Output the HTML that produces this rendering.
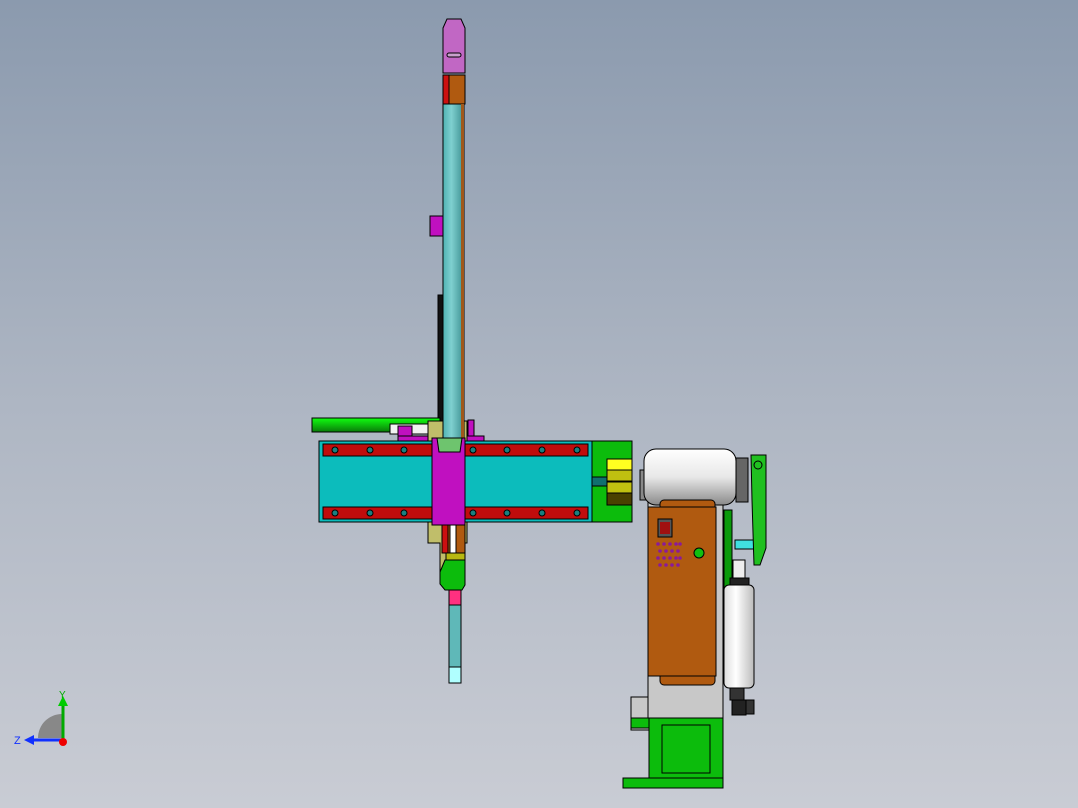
<!DOCTYPE html>
<html><head><style>
html,body{margin:0;padding:0}
body{width:1078px;height:808px;overflow:hidden;background:linear-gradient(#8b9aae,#aeb6c3 50%,#c9ccd4);font-family:"Liberation Sans",sans-serif}
svg{position:absolute;left:0;top:0}
</style></head><body>
<svg width="1078" height="808" viewBox="0 0 1078 808" stroke="#000" stroke-width="1">
<defs>
<linearGradient id="tl" x1="0" x2="1"><stop offset="0" stop-color="#4fb3b3"/><stop offset=".4" stop-color="#7fd0d0"/><stop offset="1" stop-color="#3c8f90"/></linearGradient>
<linearGradient id="gb" x1="0" y1="0" x2="0" y2="1"><stop offset="0" stop-color="#10ff10"/><stop offset="1" stop-color="#0a7a0a"/></linearGradient>
<linearGradient id="wc" x1="0" y1="0" x2="0" y2="1"><stop offset="0" stop-color="#fff"/><stop offset=".5" stop-color="#e8e8e8"/><stop offset="1" stop-color="#8a8a8a"/></linearGradient>
<linearGradient id="wm" x1="0" x2="1"><stop offset="0" stop-color="#ddd"/><stop offset=".4" stop-color="#fff"/><stop offset="1" stop-color="#bbb"/></linearGradient>
</defs>
<rect x="438" y="295" width="6" height="145" fill="#111"/>
<path d="M443 28 L447 19 H461 L465 28 V73 H443 Z" fill="#c167c4"/>
<rect x="447" y="53" width="14" height="4" rx="2" fill="#c8a0cc"/>
<rect x="443" y="75" width="6" height="29" fill="#cc1010"/>
<rect x="449" y="75" width="16" height="29" fill="#b05a10"/>
<rect x="312" y="418" width="128" height="14" fill="url(#gb)"/>
<rect x="390" y="424" width="40" height="10" fill="#f2f2f2"/>
<rect x="398" y="426" width="14" height="12" fill="#c010c0"/>
<rect x="468" y="420" width="6" height="20" fill="#c010c0"/>
<rect x="398" y="436" width="86" height="6" fill="#c010c0"/>
<path d="M428 421 H467 V543 H447 V575 H440 V543 H428 Z" fill="#c0be6a"/>
<rect x="443" y="104" width="21" height="336" fill="url(#tl)"/>
<rect x="461" y="104" width="3" height="336" fill="#a0581a" stroke="none"/>
<rect x="430" y="216" width="13" height="20" fill="#c010c0"/>
<rect x="319" y="441" width="273" height="81" fill="#0cbcbc"/>
<rect x="323" y="444" width="265" height="12" fill="#c00c0c"/>
<rect x="323" y="507" width="265" height="12" fill="#c00c0c"/>
<g fill="#1a8080" stroke="#000">
<circle cx="335" cy="450" r="3"/><circle cx="370" cy="450" r="3"/><circle cx="404" cy="450" r="3"/><circle cx="473" cy="450" r="3"/><circle cx="507" cy="450" r="3"/><circle cx="542" cy="450" r="3"/><circle cx="577" cy="450" r="3"/>
<circle cx="335" cy="513" r="3"/><circle cx="370" cy="513" r="3"/><circle cx="404" cy="513" r="3"/><circle cx="473" cy="513" r="3"/><circle cx="507" cy="513" r="3"/><circle cx="542" cy="513" r="3"/><circle cx="577" cy="513" r="3"/>
</g>
<rect x="432" y="438" width="33" height="87" fill="#c010c0"/>
<path d="M437 438 H462 L460 452 H439 Z" fill="#6ec46e"/>
<rect x="442" y="525" width="23" height="28" fill="#b05a10"/>
<rect x="442" y="525" width="6" height="28" fill="#cc1010"/>
<rect x="450" y="525" width="6" height="40" fill="#fff"/>
<rect x="446" y="553" width="19" height="7" fill="#b8b810"/>
<path d="M445 560 H465 V585 L462 590 H445 L440 584 V572 Z" fill="#0cbc0c"/>
<rect x="449" y="590" width="12" height="15" fill="#ff3080"/>
<rect x="449" y="605" width="12" height="62" fill="#5fb8b8"/>
<rect x="449" y="667" width="12" height="16" fill="#b0ffff"/>
<rect x="592" y="441" width="40" height="81" fill="#0cbc0c"/>
<rect x="607" y="459" width="25" height="11" fill="#ffff20"/>
<rect x="607" y="470" width="25" height="11" fill="#c0c010"/>
<rect x="607" y="482" width="25" height="11" fill="#c0c010"/>
<rect x="607" y="493" width="25" height="12" fill="#4a4000"/>
<rect x="592" y="477" width="15" height="9" fill="#107070"/>
<rect x="631" y="697" width="18" height="33" fill="#c8c8c8"/>
<rect x="648" y="480" width="75" height="238" fill="#c8c8c8"/>
<rect x="640" y="470" width="10" height="30" fill="#888"/>
<rect x="644" y="449" width="92" height="56" rx="12" fill="url(#wc)"/>
<rect x="736" y="458" width="12" height="44" fill="#666"/>
<rect x="660" y="500" width="55" height="185" rx="4" fill="#b05a10"/>
<rect x="648" y="507" width="68" height="169" fill="#b05a10"/>
<rect x="658" y="519" width="14" height="18" fill="#555"/>
<rect x="660" y="522" width="10" height="12" fill="#a01010" stroke="none"/>
<circle cx="699" cy="553" r="5" fill="#10c010"/>
<g fill="#8a1a9a" stroke="none">
<circle cx="658" cy="544" r="1.8"/><circle cx="664" cy="544" r="1.8"/><circle cx="670" cy="544" r="1.8"/><circle cx="676" cy="544" r="1.8"/><circle cx="680" cy="544" r="1.8"/>
<circle cx="660" cy="551" r="1.8"/><circle cx="666" cy="551" r="1.8"/><circle cx="672" cy="551" r="1.8"/><circle cx="678" cy="551" r="1.8"/>
<circle cx="658" cy="558" r="1.8"/><circle cx="664" cy="558" r="1.8"/><circle cx="670" cy="558" r="1.8"/><circle cx="676" cy="558" r="1.8"/><circle cx="680" cy="558" r="1.8"/>
<circle cx="660" cy="565" r="1.8"/><circle cx="666" cy="565" r="1.8"/><circle cx="672" cy="565" r="1.8"/><circle cx="678" cy="565" r="1.8"/>
</g>
<rect x="649" y="718" width="74" height="62" fill="#0cbc0c"/>
<rect x="662" y="725" width="48" height="48" fill="#0cbc0c"/>
<rect x="631" y="718" width="18" height="10" fill="#0cbc0c"/>
<rect x="623" y="778" width="100" height="10" fill="#0cbc0c"/>
<rect x="724" y="510" width="8" height="95" fill="#0a9a0a"/>
<rect x="735" y="540" width="22" height="9" fill="#40e0e0"/>
<path d="M751 455 H766 V548 L760 565 H754 L752 500 Z" fill="#20c020"/>
<circle cx="758" cy="465" r="4" fill="#20c020"/>
<rect x="733" y="560" width="12" height="20" fill="#eee"/>
<rect x="730" y="578" width="19" height="8" fill="#222"/>
<rect x="724" y="585" width="30" height="103" rx="5" fill="url(#wm)"/>
<rect x="730" y="688" width="14" height="12" fill="#333"/>
<rect x="744" y="700" width="10" height="14" fill="#333"/>
<rect x="732" y="700" width="14" height="15" fill="#222"/>
</svg>
<svg width="80" height="70" style="left:10px;top:688px" viewBox="0 0 80 70">
<path d="M28 50 A24 24 0 0 1 52 26 V50 Z" fill="#888" stroke="none"/>
<line x1="53" y1="52" x2="53" y2="16" stroke="#0a0" stroke-width="3"/>
<path d="M48 18 L53 8 L58 18 Z" fill="#0c0"/>
<line x1="53" y1="52" x2="22" y2="52" stroke="#1030ff" stroke-width="3"/>
<path d="M24 47 L14 52 L24 57 Z" fill="#1030ff"/>
<circle cx="53" cy="54" r="4" fill="#e00"/>
<text x="49" y="10" font-size="10" fill="#0a0" font-family="Liberation Sans">Y</text>
<text x="4" y="56" font-size="11" fill="#1030ff" font-family="Liberation Sans">Z</text>
</svg>
</body></html>
